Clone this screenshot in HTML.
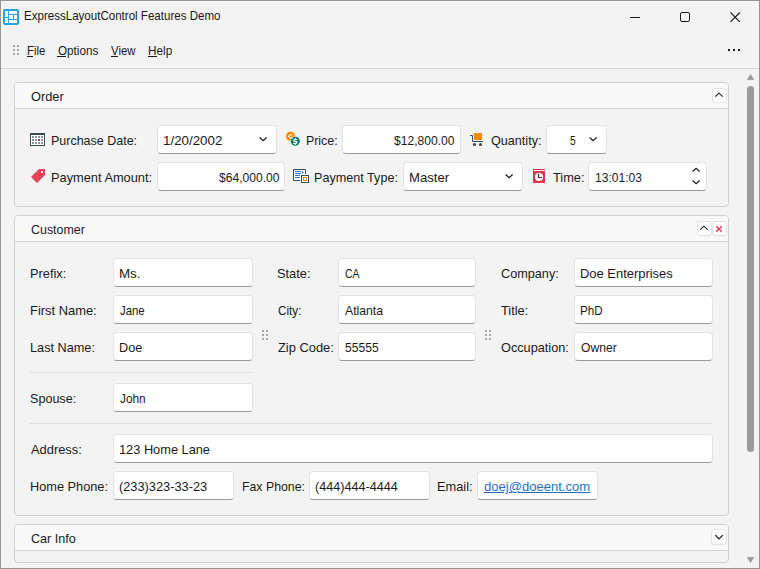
<!DOCTYPE html>
<html><head><meta charset="utf-8"><style>
html,body{margin:0;padding:0;}
body{width:760px;height:569px;position:relative;overflow:hidden;background:#f3f3f3;font-family:"Liberation Sans",sans-serif;}
.win{position:absolute;left:0;top:0;width:758px;height:567px;border:1px solid #959595;background:#f3f3f3;}
.t{position:absolute;font-size:13px;line-height:15px;white-space:pre;transform-origin:0 0;}
.ed{position:absolute;box-sizing:border-box;background:#fff;border:1px solid #e3e3e3;border-bottom:1px solid #9a9a9a;border-radius:4px;}
.grp{position:absolute;box-sizing:border-box;border:1px solid #d0d0d0;border-radius:4px;overflow:hidden;}
.gh{background:#f9f9f9;border-bottom:1px solid #d3d3d3;}
.hb{position:absolute;box-sizing:border-box;background:#fff;border:1px solid #e2e2e2;border-radius:3px;}
.ic{position:absolute;overflow:visible;}
.ln{position:absolute;}
</style></head><body>
<div class="win"><div style="position:absolute;left:0;top:0;right:0;bottom:0;border-top:1px solid #f9f9f9;border-left:1px solid #f9f9f9"></div></div>
<div class="ln" style="left:1px;top:67px;width:758px;height:1px;background:#f8f8f8"></div><div class="ln" style="left:1px;top:68px;width:758px;height:1px;background:#d0d0d0"></div><div class="ln" style="left:1px;top:69px;width:758px;height:1px;background:#f8f8f8"></div><div class="ln" style="left:30px;top:372px;width:223px;height:1px;background:#e0e0e0"></div><div class="ln" style="left:30px;top:423px;width:683px;height:1px;background:#e0e0e0"></div>
<div class="grp" style="left:14px;top:82px;width:715px;height:125px"><div class="gh" style="height:25px"></div></div><div class="grp" style="left:14px;top:215px;width:715px;height:301px"><div class="gh" style="height:25px"></div></div><div class="grp" style="left:14px;top:524px;width:715px;height:39px"><div class="gh" style="height:25px"></div></div>
<div class="ed" style="left:157px;top:125px;width:120px;height:29px"></div><div class="ed" style="left:342px;top:125px;width:119px;height:29px"></div><div class="ed" style="left:546px;top:125px;width:61px;height:29px"></div><div class="ed" style="left:157px;top:162px;width:128px;height:29px"></div><div class="ed" style="left:403px;top:162px;width:120px;height:29px"></div><div class="ed" style="left:588px;top:162px;width:119px;height:29px"></div><div class="ed" style="left:113px;top:258px;width:140px;height:29px"></div><div class="ed" style="left:338px;top:258px;width:138px;height:29px"></div><div class="ed" style="left:574px;top:258px;width:139px;height:29px"></div><div class="ed" style="left:113px;top:295px;width:140px;height:29px"></div><div class="ed" style="left:338px;top:295px;width:138px;height:29px"></div><div class="ed" style="left:574px;top:295px;width:139px;height:29px"></div><div class="ed" style="left:113px;top:332px;width:140px;height:29px"></div><div class="ed" style="left:338px;top:332px;width:138px;height:29px"></div><div class="ed" style="left:574px;top:332px;width:139px;height:29px"></div><div class="ed" style="left:113px;top:383px;width:140px;height:29px"></div><div class="ed" style="left:113px;top:434px;width:600px;height:29px"></div><div class="ed" style="left:113px;top:471px;width:121px;height:29px"></div><div class="ed" style="left:309px;top:471px;width:121px;height:29px"></div><div class="ed" style="left:477px;top:471px;width:121px;height:29px"></div>
<svg class="ic" style="left:256px;top:134px" width="14" height="10" viewBox="0 0 14 10"><polyline points="3.6000000000000227,3.5 7.100000000000023,6.699999999999989 10.600000000000023,3.5" fill="none" stroke="#1a1a1a" stroke-width="1.2"/></svg><svg class="ic" style="left:586px;top:134px" width="14" height="10" viewBox="0 0 14 10"><polyline points="3.6000000000000227,3.5 7.100000000000023,6.699999999999989 10.600000000000023,3.5" fill="none" stroke="#1a1a1a" stroke-width="1.2"/></svg><svg class="ic" style="left:502px;top:171px" width="14" height="10" viewBox="0 0 14 10"><polyline points="3.6000000000000227,3.5 7.100000000000023,6.699999999999989 10.600000000000023,3.5" fill="none" stroke="#1a1a1a" stroke-width="1.2"/></svg><svg class="ic" style="left:689px;top:165px" width="14" height="10" viewBox="0 0 14 10"><polyline points="3.6000000000000227,6.5 7.100000000000023,3.3000000000000114 10.600000000000023,6.5" fill="none" stroke="#1a1a1a" stroke-width="1.2"/></svg><svg class="ic" style="left:689px;top:177px" width="14" height="10" viewBox="0 0 14 10"><polyline points="3.6000000000000227,3.5 7.100000000000023,6.699999999999989 10.600000000000023,3.5" fill="none" stroke="#1a1a1a" stroke-width="1.2"/></svg><div class="hb" style="left:712px;top:88px;width:15px;height:15px"></div><svg class="ic" style="left:712px;top:90px" width="14" height="10" viewBox="0 0 14 10"><polyline points="3.2999999999999545,6.599999999999994 7.0,3.200000000000003 10.700000000000045,6.599999999999994" fill="none" stroke="#1a1a1a" stroke-width="1.1"/></svg><div class="hb" style="left:697px;top:221px;width:15px;height:15px"></div><svg class="ic" style="left:697px;top:223px" width="14" height="10" viewBox="0 0 14 10"><polyline points="3.2000000000000455,6.599999999999994 6.9500000000000455,3.1999999999999886 10.700000000000045,6.599999999999994" fill="none" stroke="#1a1a1a" stroke-width="1.1"/></svg><div class="hb" style="left:712px;top:221px;width:15px;height:15px"></div><svg class="ic" style="left:715px;top:225px" width="8" height="8" viewBox="0 0 8 8"><path d="M1.3,1.3 L6.7,6.7 M6.7,1.3 L1.3,6.7" stroke="#e23a4f" stroke-width="1.5"/></svg><div class="hb" style="left:711px;top:529px;width:16px;height:16px"></div><svg class="ic" style="left:712px;top:532px" width="14" height="10" viewBox="0 0 14 10"><polyline points="3.2999999999999545,3.1000000000000227 7.0,6.899999999999977 10.700000000000045,3.1000000000000227" fill="none" stroke="#1a1a1a" stroke-width="1.3"/></svg><svg class="ic" style="left:13px;top:45px" width="6" height="10"><rect x="0" y="0" width="2" height="2" fill="#a8a8a8"/><rect x="4" y="0" width="2" height="2" fill="#a8a8a8"/><rect x="0" y="4" width="2" height="2" fill="#a8a8a8"/><rect x="4" y="4" width="2" height="2" fill="#a8a8a8"/><rect x="0" y="8" width="2" height="2" fill="#a8a8a8"/><rect x="4" y="8" width="2" height="2" fill="#a8a8a8"/></svg><svg class="ic" style="left:262px;top:330px" width="6" height="10"><rect x="0" y="0" width="2" height="2" fill="#a8a8a8"/><rect x="4" y="0" width="2" height="2" fill="#a8a8a8"/><rect x="0" y="4" width="2" height="2" fill="#a8a8a8"/><rect x="4" y="4" width="2" height="2" fill="#a8a8a8"/><rect x="0" y="8" width="2" height="2" fill="#a8a8a8"/><rect x="4" y="8" width="2" height="2" fill="#a8a8a8"/></svg><svg class="ic" style="left:485px;top:330px" width="6" height="10"><rect x="0" y="0" width="2" height="2" fill="#a8a8a8"/><rect x="4" y="0" width="2" height="2" fill="#a8a8a8"/><rect x="0" y="4" width="2" height="2" fill="#a8a8a8"/><rect x="4" y="4" width="2" height="2" fill="#a8a8a8"/><rect x="0" y="8" width="2" height="2" fill="#a8a8a8"/><rect x="4" y="8" width="2" height="2" fill="#a8a8a8"/></svg><svg class="ic" style="left:30px;top:133px" width="15" height="13" viewBox="0 0 15 13">
<rect x="0" y="0" width="15" height="13" fill="#3e4b53"/><rect x="1" y="2" width="13" height="10" fill="#fff"/>
<rect x="2" y="3" width="2" height="2" fill="#8f9498"/><rect x="5" y="3" width="2" height="2" fill="#8f9498"/><rect x="8" y="3" width="2" height="2" fill="#8f9498"/><rect x="11" y="3" width="2" height="2" fill="#8f9498"/><rect x="2" y="6" width="2" height="2" fill="#8f9498"/><rect x="5" y="6" width="2" height="2" fill="#8f9498"/><rect x="8" y="6" width="2" height="2" fill="#e0202f"/><rect x="11" y="6" width="2" height="2" fill="#8f9498"/><rect x="2" y="9" width="2" height="2" fill="#8f9498"/><rect x="5" y="9" width="2" height="2" fill="#8f9498"/><rect x="8" y="9" width="2" height="2" fill="#8f9498"/><rect x="11" y="9" width="2" height="2" fill="#8f9498"/></svg><svg class="ic" style="left:30px;top:168px" width="16" height="16" viewBox="0 0 16 16">
<path d="M9,1 L15,1 L15,7 L7,15 L1,9 Z M11,3 L11,5 L13,5 L13,3 Z" fill="#e2455a" fill-rule="evenodd"/></svg><svg class="ic" style="left:284px;top:130px" width="18" height="18" viewBox="0 0 18 18">
<circle cx="6.5" cy="6.3" r="4.6" fill="#f68b0a"/>
<circle cx="11.3" cy="11.3" r="5.1" fill="#f3f3f3"/>
<circle cx="11.3" cy="11.3" r="4.5" fill="#0c7e6b"/>
<path d="M8.6,4.7 L6.3,4.7 L4.6,6.3 L6.3,7.9 L8.6,7.9" stroke="#fff" stroke-width="1.1" fill="none"/>
<path d="M13.3,9.5 L10.6,9.5 Q9.8,9.6 9.8,10.5 Q9.9,11.3 10.8,11.4 L11.9,11.4 Q12.9,11.5 12.9,12.4 Q12.8,13.3 12,13.3 L9.3,13.3 M11.4,8.2 L11.4,9.5 M11.4,13.3 L11.4,14.7" stroke="#fff" stroke-width="1.2" fill="none"/>
</svg><svg class="ic" style="left:293px;top:169px" width="17" height="15" viewBox="0 0 17 15">
<path d="M0.5,0.5 L12.5,0.5 L12.5,11.5 L0.5,11.5 Z" fill="#fff"/><path d="M7,11.5 L0.5,11.5 L0.5,0.5 L12.5,0.5 L12.5,5" stroke="#3e4b53" stroke-width="1" fill="none"/>
<rect x="8.5" y="6.5" width="7" height="7" stroke="#3e4b53" stroke-width="1" fill="#fff"/>
<rect x="10.5" y="8.5" width="3" height="3" stroke="#f68b0a" stroke-width="1" fill="#fff"/>
<path d="M2,2.5 L8,2.5 M2,4.5 L8,4.5 M2,6.5 L7,6.5 M2,8.5 L7,8.5" stroke="#1f7fd8" stroke-width="1"/>
<path d="M9,2 L11,3.5 L9,5 Z" fill="#1f7fd8"/>
</svg><svg class="ic" style="left:470px;top:133px" width="14" height="14" viewBox="0 0 14 14">
<rect x="4" y="0" width="8" height="7" fill="#f68b0a"/>
<path d="M0,2.5 L2.5,2.5 L2.5,8.5 L13,8.5" stroke="#3e4b53" stroke-width="1" fill="none"/>
<circle cx="4.5" cy="11.5" r="1.6" fill="#3e4b53"/><circle cx="10.5" cy="11.5" r="1.6" fill="#3e4b53"/>
</svg><svg class="ic" style="left:533px;top:169px" width="13" height="14" viewBox="0 0 13 14">
<rect x="0" y="0" width="12" height="14" fill="#e2364c"/>
<rect x="1" y="1" width="11" height="1" fill="#fff"/>
<circle cx="6" cy="8" r="4.1" fill="#fff"/>
<path d="M5.5,5 L5.5,8.5 L9,8.5" stroke="#2b2f33" stroke-width="1.2" fill="none"/>
</svg><svg class="ic" style="left:3px;top:9px" width="16" height="16" viewBox="0 0 16 16">
<rect x="0" y="0" width="16" height="16" rx="2" fill="#1ea6e6"/>
<rect x="2" y="2" width="3" height="6" fill="#fff"/>
<rect x="2" y="9" width="3" height="5" fill="#fff"/>
<rect x="6" y="2" width="8" height="3" fill="#fff"/>
<rect x="6" y="6" width="4" height="4" fill="#fff"/>
<rect x="11" y="6" width="3" height="4" fill="#fff"/>
<rect x="6" y="11" width="8" height="3" fill="#fff"/>
</svg><div class="ln" style="left:630px;top:17px;width:10px;height:1px;background:#1a1a1a"></div><svg class="ic" style="left:679px;top:11px" width="13" height="13" viewBox="0 0 13 13"><rect x="1.5" y="1.5" width="9" height="9" rx="1.5" fill="none" stroke="#1a1a1a" stroke-width="1"/></svg><svg class="ic" style="left:729px;top:11px" width="13" height="13" viewBox="0 0 13 13"><path d="M1.5,1.5 L10.8,10.8 M10.8,1.5 L1.5,10.8" stroke="#1a1a1a" stroke-width="1.1"/></svg><div class="ln" style="left:728px;top:49px;width:2px;height:2px;background:#1a1a1a"></div><div class="ln" style="left:733px;top:49px;width:2px;height:2px;background:#1a1a1a"></div><div class="ln" style="left:738px;top:49px;width:2px;height:2px;background:#1a1a1a"></div><div class="ln" style="left:27px;top:56px;width:6px;height:1px;background:#1a1a1a"></div><div class="ln" style="left:57px;top:56px;width:9px;height:1px;background:#1a1a1a"></div><div class="ln" style="left:111px;top:56px;width:7px;height:1px;background:#1a1a1a"></div><div class="ln" style="left:148px;top:56px;width:9px;height:1px;background:#1a1a1a"></div>
<svg class="ic" style="left:746px;top:73px" width="9" height="8" viewBox="0 0 9 8"><path d="M4.5,1.6 L7.6,6.6 L1.4,6.6 Z" fill="#9a9a9a" stroke="#9a9a9a" stroke-width="0.8" stroke-linejoin="round"/></svg>
<div class="ln" style="left:747px;top:86px;width:7px;height:366px;border-radius:3.5px;background:#9a9a9a"></div>
<svg class="ic" style="left:746px;top:556px" width="9" height="8" viewBox="0 0 9 8"><path d="M1.4,1.4 L7.6,1.4 L4.5,6.4 Z" fill="#9a9a9a" stroke="#9a9a9a" stroke-width="0.8" stroke-linejoin="round"/></svg>
<span class="t" style="left:23.91px;top:8px;transform:scaleX(0.8886);color:#1a1a1a;">ExpressLayoutControl Features Demo</span><span class="t" style="left:26.93px;top:43px;transform:scaleX(0.8750);color:#1a1a1a;">File</span><span class="t" style="left:57.80px;top:43px;transform:scaleX(0.9000);color:#1a1a1a;">Options</span><span class="t" style="left:110.80px;top:43px;transform:scaleX(0.8750);color:#1a1a1a;">View</span><span class="t" style="left:147.90px;top:43px;transform:scaleX(0.9038);color:#1a1a1a;">Help</span><span class="t" style="left:30.80px;top:89px;transform:scaleX(0.9853);color:#1a1a1a;">Order</span><span class="t" style="left:50.84px;top:133px;transform:scaleX(0.9602);color:#1a1a1a;">Purchase Date:</span><span class="t" style="left:162.77px;top:133px;transform:scaleX(1.0268);color:#1a1a1a;">1/20/2002</span><span class="t" style="left:305.85px;top:133px;transform:scaleX(0.9516);color:#1a1a1a;">Price:</span><span class="t" style="left:393.80px;top:133px;transform:scaleX(0.9308);color:#1a1a1a;">$12,800.00</span><span class="t" style="left:490.80px;top:133px;transform:scaleX(0.9706);color:#1a1a1a;">Quantity:</span><span class="t" style="left:569.80px;top:133px;transform:scaleX(0.7857);color:#1a1a1a;">5</span><span class="t" style="left:50.81px;top:170px;transform:scaleX(0.9851);color:#1a1a1a;">Payment Amount:</span><span class="t" style="left:218.80px;top:170px;transform:scaleX(0.9308);color:#1a1a1a;">$64,000.00</span><span class="t" style="left:313.83px;top:170px;transform:scaleX(0.9706);color:#1a1a1a;">Payment Type:</span><span class="t" style="left:408.79px;top:170px;transform:scaleX(1.0128);color:#1a1a1a;">Master</span><span class="t" style="left:552.80px;top:170px;transform:scaleX(0.9839);color:#1a1a1a;">Time:</span><span class="t" style="left:594.87px;top:170px;transform:scaleX(0.9286);color:#1a1a1a;">13:01:03</span><span class="t" style="left:30.80px;top:222px;transform:scaleX(0.9561);color:#1a1a1a;">Customer</span><span class="t" style="left:29.81px;top:266px;transform:scaleX(0.9857);color:#1a1a1a;">Prefix:</span><span class="t" style="left:118.77px;top:266px;transform:scaleX(1.0263);color:#1a1a1a;">Ms.</span><span class="t" style="left:29.81px;top:303px;transform:scaleX(0.9923);color:#1a1a1a;">First Name:</span><span class="t" style="left:119.80px;top:303px;transform:scaleX(0.8750);color:#1a1a1a;">Jane</span><span class="t" style="left:29.82px;top:340px;transform:scaleX(0.9769);color:#1a1a1a;">Last Name:</span><span class="t" style="left:118.82px;top:340px;transform:scaleX(0.9783);color:#1a1a1a;">Doe</span><span class="t" style="left:29.83px;top:391px;transform:scaleX(0.9674);color:#1a1a1a;">Spouse:</span><span class="t" style="left:119.80px;top:391px;transform:scaleX(0.9107);color:#1a1a1a;">John</span><span class="t" style="left:276.82px;top:266px;transform:scaleX(0.9844);color:#1a1a1a;">State:</span><span class="t" style="left:344.80px;top:266px;transform:scaleX(0.8056);color:#1a1a1a;">CA</span><span class="t" style="left:277.80px;top:303px;transform:scaleX(0.9000);color:#1a1a1a;">City:</span><span class="t" style="left:344.80px;top:303px;transform:scaleX(0.9390);color:#1a1a1a;">Atlanta</span><span class="t" style="left:277.80px;top:340px;transform:scaleX(0.9911);color:#1a1a1a;">Zip Code:</span><span class="t" style="left:344.80px;top:340px;transform:scaleX(0.9306);color:#1a1a1a;">55555</span><span class="t" style="left:500.80px;top:266px;transform:scaleX(0.9746);color:#1a1a1a;">Company:</span><span class="t" style="left:579.81px;top:266px;transform:scaleX(0.9946);color:#1a1a1a;">Doe Enterprises</span><span class="t" style="left:500.80px;top:303px;transform:scaleX(0.9815);color:#1a1a1a;">Title:</span><span class="t" style="left:579.90px;top:303px;transform:scaleX(0.8958);color:#1a1a1a;">PhD</span><span class="t" style="left:500.80px;top:340px;transform:scaleX(0.9783);color:#1a1a1a;">Occupation:</span><span class="t" style="left:580.80px;top:340px;transform:scaleX(0.9359);color:#1a1a1a;">Owner</span><span class="t" style="left:30.80px;top:442px;transform:scaleX(0.9902);color:#1a1a1a;">Address:</span><span class="t" style="left:118.82px;top:442px;transform:scaleX(0.9835);color:#1a1a1a;">123 Home Lane</span><span class="t" style="left:29.82px;top:479px;transform:scaleX(0.9808);color:#1a1a1a;">Home Phone:</span><span class="t" style="left:118.82px;top:479px;transform:scaleX(0.9831);color:#1a1a1a;">(233)323-33-23</span><span class="t" style="left:241.85px;top:479px;transform:scaleX(0.9462);color:#1a1a1a;">Fax Phone:</span><span class="t" style="left:314.83px;top:479px;transform:scaleX(0.9702);color:#1a1a1a;">(444)444-4444</span><span class="t" style="left:436.81px;top:479px;transform:scaleX(0.9853);color:#1a1a1a;">Email:</span><span class="t" style="left:483.80px;top:479px;transform:scaleX(1.0048);color:#1f6fc5;text-decoration:underline;">doej@doeent.com</span><span class="t" style="left:30.80px;top:531px;transform:scaleX(0.9674);color:#1a1a1a;">Car Info</span>
</body></html>
